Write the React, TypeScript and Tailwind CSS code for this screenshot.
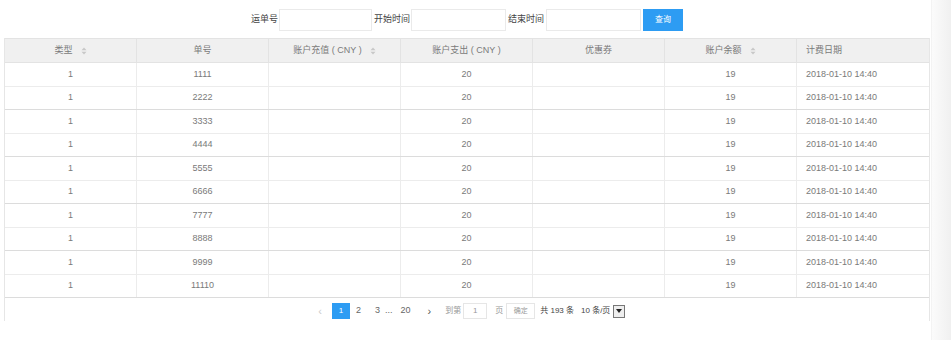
import React from "react";

const rows = ["1111","2222","3333","4444","5555","6666","7777","8888","9999","11110"];

function Sort() {
  return (
    <svg width="6" height="8" viewBox="0 0 6 8" className="ml-[8px] inline-block">
      <path d="M3 0.5 L5.5 3.2 H0.5 Z" fill="#c8c8c8" />
      <path d="M3 7.5 L5.5 4.8 H0.5 Z" fill="#c8c8c8" />
    </svg>
  );
}

export default function App() {
  const font = { fontFamily: '"Liberation Sans", "Noto Sans CJK SC", sans-serif' };
  return (
    <div className="w-[951px] h-[340px] bg-white relative overflow-hidden text-[9px] text-[#7a7a7a]" style={font}>
      <div className="flex items-center h-[38px] pl-[251px] pt-[1px]">
        <span className="text-[#444] mr-[1px]">运单号</span>
        <div className="w-[93px] h-[22px] border border-[#eaeaea] bg-white" />
        <span className="text-[#444] ml-[2px] mr-[1px]">开始时间</span>
        <div className="w-[95px] h-[22px] border border-[#eaeaea] bg-white" />
        <span className="text-[#444] ml-[2px] mr-[2px]">结束时间</span>
        <div className="w-[95px] h-[22px] border border-[#eaeaea] bg-white" />
        <div className="ml-[2px] w-[40px] h-[22px] bg-[#2d9cf3] text-white flex items-center justify-center text-[8px]">查询</div>
      </div>
      <div className="absolute right-0 top-0 w-[20px] h-[340px] bg-gradient-to-r from-[#fbfbfb] to-[#f0f0f0] border-l border-[#f3f3f3]" />
      <div className="ml-[4px] w-[926px] h-[283px] border-l border-r border-[#e6e6e6]">
        <div className="grid grid-cols-7 h-[25px] bg-[#f0f0f0] border-t border-b border-[#e3e3e3]">
          <div className="flex items-center justify-center border-r border-[#e3e3e3]">类型<Sort /></div>
          <div className="flex items-center justify-center border-r border-[#e3e3e3]">单号</div>
          <div className="flex items-center justify-center border-r border-[#e3e3e3]">账户充值 ( CNY )<Sort /></div>
          <div className="flex items-center justify-center border-r border-[#e3e3e3]">账户支出 ( CNY )</div>
          <div className="flex items-center justify-center border-r border-[#e3e3e3]">优惠券</div>
          <div className="flex items-center justify-center border-r border-[#e3e3e3]">账户余额<Sort /></div>
          <div className="flex items-center pl-[9px]">计费日期</div>
        </div>
        {rows.map((r, i) => (
          <div key={r} className={`grid grid-cols-7 h-[23.5px] border-b ${i % 2 === 1 ? "border-[#dcdcdc]" : "border-[#ececec]"}`}>
            <div className="flex items-center justify-center border-r border-[#ececec]">1</div>
            <div className="flex items-center justify-center border-r border-[#ececec]">{r}</div>
            <div className="border-r border-[#ececec]" />
            <div className="flex items-center justify-center border-r border-[#ececec]">20</div>
            <div className="border-r border-[#ececec]" />
            <div className="flex items-center justify-center border-r border-[#ececec]">19</div>
            <div className="flex items-center pl-[9px]">2018-01-10 14:40</div>
          </div>
        ))}
        <div className="flex items-center h-[26px] pl-[307px] text-[#666]">
          <span className="text-[#ccc] text-[11px] w-[16px] text-center">‹</span>
          <span className="ml-[4px] w-[18px] h-[16px] bg-[#2d9cf3] text-white flex items-center justify-center text-[8px]">1</span>
          <span className="ml-[6px]">2</span>
          <span className="ml-[14px]">3</span>
          <span className="ml-[5px]">...</span>
          <span className="ml-[8px]">20</span>
          <span className="ml-[17px] text-[11px] text-[#555]">›</span>
          <span className="ml-[14px] text-[8px] text-[#999]">到第</span>
          <span className="ml-[2px] w-[24px] h-[16px] border border-[#e6e6e6] flex items-center justify-center text-[#999] text-[8px]">1</span>
          <span className="ml-[8px] text-[8px] text-[#999]">页</span>
          <span className="ml-[3px] w-[29px] h-[16px] border border-[#e6e6e6] flex items-center justify-center text-[#999] text-[7px]">确定</span>
          <span className="ml-[5px] text-[#444] text-[8px]">共 193 条</span>
          <span className="ml-[7px] text-[#444] text-[8px]">10 条/页</span>
          <span className="ml-[3px] w-[12px] h-[13px] border border-[#777] bg-[#eee] flex items-center justify-center">
            <svg width="6" height="4" viewBox="0 0 6 4"><path d="M0 0 H6 L3 4 Z" fill="#222" /></svg>
          </span>
        </div>
      </div>
    </div>
  );
}
